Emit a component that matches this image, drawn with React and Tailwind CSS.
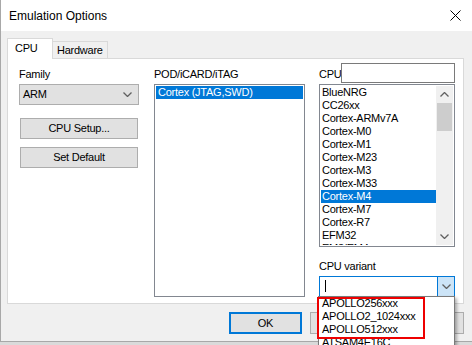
import React from "react";

const cpuList = [
	"BlueNRG",
	"CC26xx",
	"Cortex-ARMv7A",
	"Cortex-M0",
	"Cortex-M1",
	"Cortex-M23",
	"Cortex-M3",
	"Cortex-M33",
	"Cortex-M4",
	"Cortex-M7",
	"Cortex-R7",
	"EFM32",
	"EM3/EM4",
];

const variants = ["APOLLO256xxx", "APOLLO2_1024xxx", "APOLLO512xxx", "ATSAM4E16C"];

const Chevron = ({ up }) => (
	<svg width="9" height="5" viewBox="0 0 9 5">
		<polyline
			points={up ? "0.5,4.5 4.5,0.5 8.5,4.5" : "0.5,0.5 4.5,4.5 8.5,0.5"}
			fill="none"
			stroke="#606060"
			strokeWidth="1.3"
		/>
	</svg>
);

const App = () => {
	const selectedCpu = "Cortex-M4";

	return (
		<div className="w-[472px] h-[345px] overflow-hidden bg-[#dadada] font-['Liberation_Sans',Arial,sans-serif] text-black">
			<div className="w-[480px] h-[342px] bg-[#f0f0f0] border-l border-b border-[#a8a8a8] flex flex-col">
				{/* title bar */}
				<div className="h-[31px] bg-white flex items-center justify-between pl-[8px] pr-[19px]">
					<span className="text-[12px]">Emulation Options</span>
					<svg width="11" height="11" viewBox="0 0 11 11">
						<path d="M0.5 0.5 L10.5 10.5 M10.5 0.5 L0.5 10.5" stroke="#000" strokeWidth="1" />
					</svg>
				</div>

				{/* dialog body, MS Shell Dlg sized text */}
				<div className="pl-[6px] pt-[7px] flex flex-col w-[463px] text-[11px] leading-[13px] tracking-[-0.25px]">
					{/* tabs */}
					<div className="flex items-end h-[20px]">
						<div className="relative z-10 -mb-px h-[21px] w-[46px] bg-white border-l border-t border-r border-[#d9d9d9] pl-[7px] pt-[3px]">
							CPU
						</div>
						<div className="h-[17px] w-[55px] bg-[#f0f0f0] border-t border-r border-[#d9d9d9] pl-[4px] pt-[2px]">
							Hardware
						</div>
					</div>

					{/* panel */}
					<div className="h-[246px] w-[457px] bg-white border border-[#d9d9d9] flex items-start pl-[11px]">
						{/* left column */}
						<div className="w-[120px] pt-[9px] flex flex-col">
							<div>Family</div>
							<div className="mt-[3px] h-[21px] bg-[#e1e1e1] border border-[#adadad] flex items-center justify-between pl-[3px] pr-[6px]">
								<span>ARM</span>
								<Chevron />
							</div>
							<button className="mt-[13px] ml-[1px] h-[21px] w-[118px] bg-[#e1e1e1] border border-[#adadad] flex items-center justify-center">
								CPU Setup...
							</button>
							<button className="mt-[8px] ml-[1px] h-[21px] w-[118px] bg-[#e1e1e1] border border-[#adadad] flex items-center justify-center">
								Set Default
							</button>
						</div>

						{/* middle column */}
						<div className="w-[151px] ml-[15px] pt-[9px] flex flex-col">
							<div>POD/iCARD/iTAG</div>
							<div className="mt-[3px] h-[213px] border border-[#828790] p-px">
								<div className="h-[13px] bg-[#0078d7] text-white pl-[2px]">Cortex (JTAG,SWD)</div>
							</div>
						</div>

						{/* right column */}
						<div className="w-[136px] ml-[14px] pt-[4px] flex flex-col">
							<div className="flex items-center justify-between h-[20px]">
								<span className="pt-[3px]">CPU</span>
								<div className="w-[114px] h-[20px] border border-[#7a7a7a] bg-white" />
							</div>
							<div className="mt-px h-[163px] border border-[#828790] p-px flex">
								<div className="flex-1 overflow-hidden">
									{cpuList.map((c) => (
										<div
											key={c}
											className={`h-[13px] pl-[1px] whitespace-nowrap ${
												c === selectedCpu ? "bg-[#0078d7] text-white" : ""
											}`}
										>
											{c}
										</div>
									))}
								</div>
								<div className="w-[17px] bg-[#f0f0f0] flex flex-col">
									<div className="h-[17px] flex items-center justify-center">
										<Chevron up />
									</div>
									<div className="h-[28px] mx-px bg-[#cdcdcd]" />
									<div className="flex-1" />
									<div className="h-[17px] flex items-center justify-center">
										<Chevron />
									</div>
								</div>
							</div>
							<div className="mt-[13px]">CPU variant</div>
							<div className="relative mt-[3px] h-[21px] border border-[#0078d7] bg-white flex">
								<div className="flex-1 pl-[5px] pt-[3px]">
									<div className="w-px h-[12px] bg-black" />
								</div>
								<div className="w-[17px] bg-[#cce4f7] border-l border-[#0078d7] flex items-center justify-center">
									<Chevron />
								</div>

								{/* open dropdown list */}
								<div className="absolute top-full -left-[2px] w-[137px] h-[60px] bg-white border border-[#7a7a7a] shadow-[2px_2px_3px_rgba(0,0,0,0.3)]">
									{variants.map((v) => (
										<div key={v} className="h-[13px] pl-[3px] whitespace-nowrap">
											{v}
										</div>
									))}
									<div className="absolute top-0 -left-[2px] w-[108px] h-[42px] border-2 border-[#ee0000]" />
								</div>
							</div>
						</div>
					</div>

					{/* dialog buttons */}
					<div className="mt-[8px] flex justify-end gap-[8px] w-[457px]">
						<button className="w-[73px] h-[22px] bg-[#e1e1e1] border-2 border-[#0078d7] flex items-center justify-center">
							OK
						</button>
						<button className="w-[73px] h-[22px] bg-[#e1e1e1] border border-[#adadad] flex items-center justify-center">
							Cancel
						</button>
						<button className="w-[73px] h-[22px] bg-[#e1e1e1] border border-[#adadad] flex items-center justify-center">
							Help
						</button>
					</div>
				</div>
			</div>
		</div>
	);
};

export default App;
